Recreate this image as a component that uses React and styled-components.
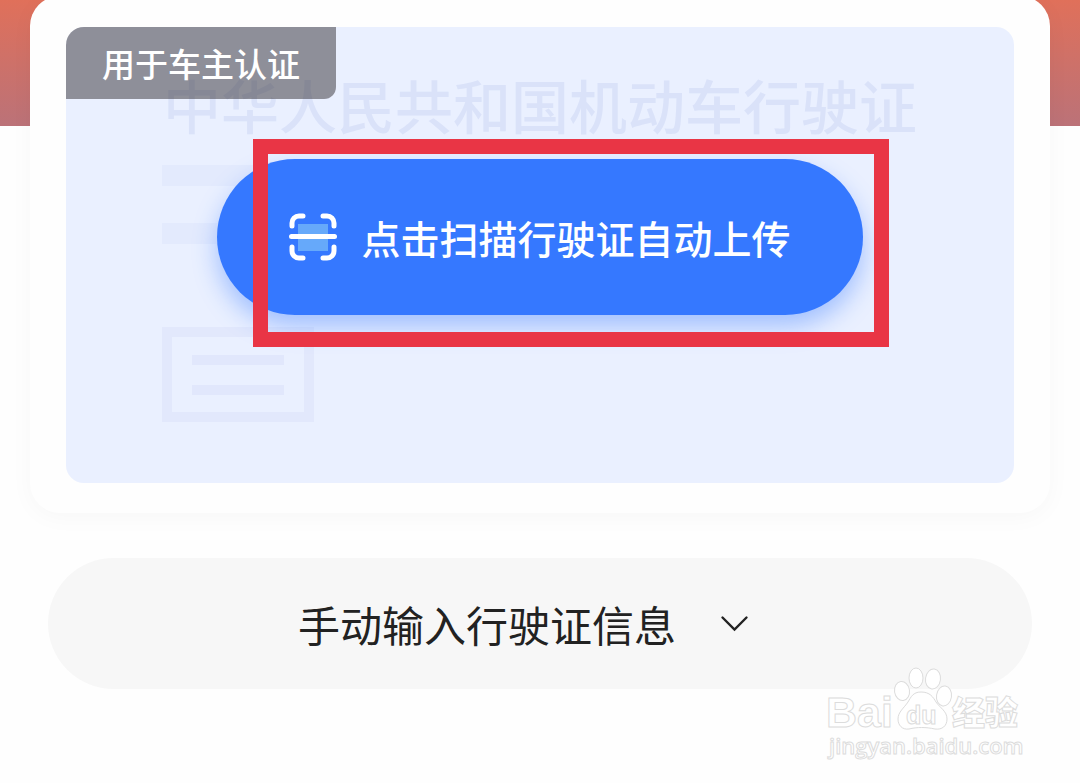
import React from "react";
import styled, { createGlobalStyle } from "styled-components";

const GlobalStyle = createGlobalStyle`
  * {
    box-sizing: border-box;
  }

  body {
    margin: 0;
    background: #fefefe;
    font-family: "Noto Sans CJK SC", "Liberation Sans", sans-serif;
  }
`;

const Page = styled.main`
  position: relative;
  display: flex;
  flex-direction: column;
  min-height: 100vh;
  overflow: hidden;
  background: linear-gradient(#e0705a, #bb7278) no-repeat top / 100% 126px;
`;

const Card = styled.section`
  margin: -4px 30px 0;
  padding: 31px 36px 30px;
  background: #fefefe;
  border-radius: 30px;
  box-shadow: 0 4px 24px rgba(0, 0, 0, 0.03);
`;

const Preview = styled.div`
  position: relative;
  display: grid;
  background: #eaf0ff;
  border-radius: 18px;
  overflow: hidden;
`;

/* Faded licence printed behind the button */
const Licence = styled.div`
  grid-area: 1 / 1;
  padding: 48px 96px 61px;
`;

const LicenceTitle = styled.p`
  margin: 0 0 32px;
  color: #dae2f9;
  font-size: 58px;
  font-weight: 500;
  line-height: 58px;
  text-align: center;
  white-space: nowrap;
`;

const Field = styled.div`
  width: 240px;
  height: 21px;
  margin-bottom: ${(props) => props.$gap};
  background: #e3eafd;
`;

const Stamp = styled.div`
  display: flex;
  flex-direction: column;
  justify-content: center;
  gap: 20px;
  width: 152px;
  height: 95px;
  padding: 0 20px;
  border: 10px solid #e2e8fc;
`;

const StampLine = styled.div`
  height: 10px;
  background: #e1e7fc;
`;

const Tag = styled.span`
  position: absolute;
  top: 0;
  left: 0;
  padding: 0 36px;
  background: rgba(49, 46, 51, 0.5);
  border-bottom-right-radius: 12px;
  color: #fff;
  font-size: 33px;
  font-weight: 500;
  line-height: 72px;
`;

const ScanArea = styled.div`
  position: relative;
  grid-area: 1 / 1;
  align-self: start;
  justify-self: center;
  margin-top: 132px;
`;

const ScanButton = styled.button`
  display: flex;
  align-items: center;
  gap: 24px;
  height: 156px;
  padding: 0 72px;
  border: 0;
  border-radius: 78px;
  background: #3578ff;
  box-shadow: 0 12px 24px rgba(53, 120, 255, 0.4);
  color: #fff;
  font-family: inherit;
  font-size: 39px;
  font-weight: 500;
  white-space: nowrap;
  cursor: pointer;
`;

const Highlight = styled.div`
  position: absolute;
  top: -20px;
  right: -26px;
  bottom: -32px;
  left: 36px;
  border: 15px solid #e93545;
  pointer-events: none;
`;

const ManualButton = styled.button`
  display: flex;
  align-items: center;
  justify-content: center;
  gap: 40px;
  height: 131px;
  margin: 45px 48px 0;
  padding: 0 30px 0 0;
  border: 0;
  border-radius: 66px;
  background: #f7f7f7;
  color: #222;
  font-family: inherit;
  font-size: 42px;
  font-weight: 400;
  cursor: pointer;
`;

const Watermark = styled.svg`
  position: absolute;
  right: 56px;
  bottom: 18px;
  fill: #fff;
  stroke: #dcdcdc;
  stroke-width: 1;
`;

function ScanIcon() {
  return (
    <svg width="48" height="48" viewBox="0 0 48 48" fill="none" aria-hidden="true">
      <rect x="9" y="11" width="30" height="27" fill="#66a9fa" />
      <g stroke="#fff" strokeWidth="5" strokeLinecap="round">
        <path d="M3 13V10a7 7 0 0 1 7-7h4" />
        <path d="M34 3h4a7 7 0 0 1 7 7v3" />
        <path d="M3 34V38a7 7 0 0 0 7 7h4" />
        <path d="M34 45h4a7 7 0 0 0 7-7v-4" />
        <path d="M2.500 23.500h43" />
      </g>
    </svg>
  );
}

function ChevronIcon() {
  return (
    <svg width="36" height="36" viewBox="0 0 36 36" fill="none" aria-hidden="true">
      <path
        d="M6.500 11.500L18.500 23.500L30.500 11.500"
        stroke="#222"
        strokeWidth="2.400"
        strokeLinecap="round"
      />
    </svg>
  );
}

function BaiduWatermark() {
  return (
    <Watermark width="200" height="100" viewBox="0 0 200 100">
      <text x="2" y="62" fontFamily="Liberation Sans, sans-serif" fontSize="43" fontWeight="700">
        Bai
      </text>
      <ellipse cx="78" cy="26" rx="7.500" ry="9.500" transform="rotate(-8 78 26)" />
      <ellipse cx="92" cy="13" rx="7" ry="10" />
      <ellipse cx="109" cy="14" rx="7.500" ry="10" transform="rotate(8 109 14)" />
      <ellipse cx="120" cy="31" rx="7.500" ry="10" transform="rotate(8 120 31)" />
      <path d="M97 27c9 0 12 5 15 10 4 6 11 9 11 17 0 7-5 11-12 10-9-2-18-2-26 0-7 1-11-4-11-10 0-7 6-11 10-17 3-5 5-10 13-10z" />
      <text x="82" y="59" fontFamily="Liberation Sans, sans-serif" fontSize="25" fontWeight="700">
        du
      </text>
      <text x="128" y="60" fontFamily="Noto Sans CJK SC, sans-serif" fontSize="33" fontWeight="900">
        经验
      </text>
      <text x="5" y="89" fontFamily="Open Sans, sans-serif" fontSize="22" fontWeight="600">
        jingyan.baidu.com
      </text>
    </Watermark>
  );
}

function App() {
  return (
    <>
      <GlobalStyle />
      <Page>
        <Card>
          <Preview>
            <Licence>
              <LicenceTitle>中华人民共和国机动车行驶证</LicenceTitle>
              <Field $gap="37px" />
              <Field $gap="83px" />
              <Stamp>
                <StampLine />
                <StampLine />
              </Stamp>
            </Licence>
            <Tag>用于车主认证</Tag>
            <ScanArea>
              <ScanButton type="button">
                <ScanIcon />
                点击扫描行驶证自动上传
              </ScanButton>
              <Highlight />
            </ScanArea>
          </Preview>
        </Card>
        <ManualButton type="button">
          手动输入行驶证信息
          <ChevronIcon />
        </ManualButton>
        <BaiduWatermark />
      </Page>
    </>
  );
}

export default App;
